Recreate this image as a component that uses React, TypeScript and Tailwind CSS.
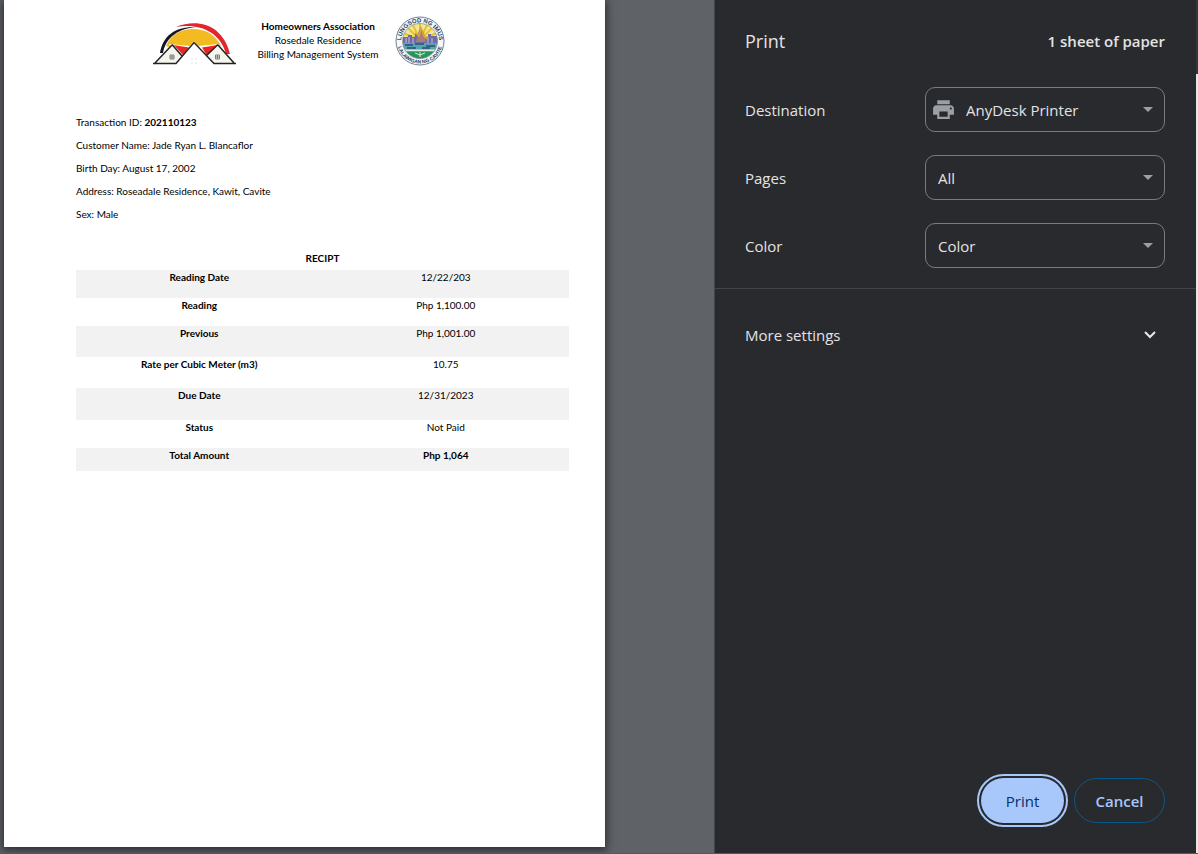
import type { ReactNode } from "react";
import { MdPrint } from "react-icons/md";

const details = [
  { label: "Transaction ID", value: "202110123", bold: true },
  { label: "Customer Name", value: "Jade Ryan L. Blancaflor" },
  { label: "Birth Day", value: "August 17, 2002" },
  { label: "Address", value: "Roseadale Residence, Kawit, Cavite" },
  { label: "Sex", value: "Male" },
];

const receipt = [
  { label: "Reading Date", value: "12/22/203", height: "h-7" },
  { label: "Reading", value: "Php 1,100.00", height: "h-7" },
  { label: "Previous", value: "Php 1,001.00", height: "h-[31px]" },
  { label: "Rate per Cubic Meter (m3)", value: "10.75", height: "h-[31px]" },
  { label: "Due Date", value: "12/31/2023", height: "h-8" },
  { label: "Status", value: "Not Paid", height: "h-7" },
  { label: "Total Amount", value: "Php 1,064", height: "h-[23px]", bold: true },
];

function HouseLogo() {
  return (
    <svg viewBox="0 0 85 46" className="mt-[21px] h-[46px] w-[85px]" aria-label="Rosedale Residence">
      <path d="M14 25C19 13 29 8 41 8s22 5 28 17L42 36Z" fill="#f3bb22" />
      <path d="M8 32C11 14 24 5 45 6 27 7 14 16 11 32Z" fill="#15152a" />
      <path d="M24 6C46-3 71 4 78 33h-4C68 10 46 2 24 6Z" fill="#e1262d" />
      <path d="M17 23l21 2 4-5 4 5 21-2-9 18H27Z" fill="#fff" />
      <path d="M21 24l16 2.500-7 8.500Z" fill="#ee2424" />
      <path d="M66 24l-16 2.500 5 8.500Z" fill="#ee2424" />
      <path d="M3 42 21 23l10 11-7 8Z" fill="#f3f6ef" />
      <path d="M82 42 66 23l-12 12 8 7Z" fill="#f3f6ef" />
      <path d="M24 42 42 22l20 20Z" fill="#fff" />
      <path d="M1 42.500H24L42 21.500 62 42.500H84M3 42 20 24M66 24 82 42M20 23.500 30 35M66 23.500 54 35" fill="none" stroke="#272222" strokeWidth="1.500" />
      <path d="M18 34h4v4h-4ZM20 34v4M18 36h4M63.500 34h4v4h-4ZM65.500 34v4M63.500 36h4" fill="none" stroke="#77736c" strokeWidth="0.900" />
      <path d="M39 37h2v2h-2ZM43 37h2v2h-2ZM39 41h2v2h-2ZM43 41h2v2h-2Z" fill="#f0f0f0" />
    </svg>
  );
}

function CitySeal() {
  return (
    <svg viewBox="0 0 50 52" className="mt-[15px] h-[52px] w-[50px]" aria-label="City seal">
      <defs>
        <path id="seal-top" d="M5.800 32A20 20 0 1 1 44.200 32" transform="translate(1.250 1.300) scale(.95)" />
        <path id="seal-bottom" d="M2.800 31A22.800 22.800 0 0 0 47.200 31" />
        <clipPath id="seal-disc"><circle cx="25" cy="26" r="17.500" /></clipPath>
      </defs>
      <circle cx="25" cy="26" r="24" fill="#f5f8f6" stroke="#57768b" strokeWidth="0.900" />
      <g clipPath="url(#seal-disc)">
        <path d="M7 8h36v36H7Z" fill="#f3e694" />
        <path d="M25 25 10 10M25 25 17 8M25 25V8M25 25 33 8M25 25 40 10M25 25 8 18M25 25 42 18" stroke="#e7c22f" strokeWidth="2" />
        <path d="M8 22h5v-2h4v2h3v-3h4v3h9v-3h3v2h7v9H8Z" fill="#6c6aa8" />
        <path d="M11 23v5M14 22v6M18 23v5M33 22v6M37 23v5" stroke="#d9c8dd" strokeWidth="0.900" />
        <path d="M21 27l3-12 2-3 3 6 2 9Z" fill="#a78170" />
        <path d="M20 18l4 3 2-8 3 8 3 3" fill="none" stroke="#d9a73d" strokeWidth="1.500" />
        <path d="M7 28h36v7H7Z" fill="#5aa3b4" />
        <path d="M10 30h8M20 29h9M31 31h9M12 33h9M27 33h8" stroke="#294f73" strokeWidth="1.300" />
        <path d="M7 35h36v9H7Z" fill="#289459" />
        <path d="M7 34.500h36v1.800H7Z" fill="#dfeedd" />
        <path d="M20 38l5 2 5-2M25 37v5" stroke="#d7ead9" strokeWidth="1" fill="none" />
      </g>
      <circle cx="25" cy="26" r="17.500" fill="none" stroke="#71909a" strokeWidth="0.700" />
      <g fill="#233c68" fontFamily="Liberation Sans, sans-serif" fontWeight="700">
        <text fontSize="6" textAnchor="middle"><textPath href="#seal-top" startOffset="50%">LUNGSOD NG IMUS</textPath></text>
        <text fontSize="5" textAnchor="middle"><textPath href="#seal-bottom" startOffset="50%">LALAWIGAN NG CAVITE</textPath></text>
      </g>
    </svg>
  );
}

function Setting({ id, label, options, icon }: { id: string; label: string; options: string[]; icon?: ReactNode }) {
  return (
    <div className="flex items-center justify-between">
      <label htmlFor={id} className="pt-0.5">{label}</label>
      <div className="relative w-60">
        {icon}
        <select
          id={id}
          className={
            "block h-[45px] w-full appearance-none rounded-[10px] border border-[#7b7b7b] bg-transparent pr-9 pt-px text-[15px] text-[#e3e3e3] outline-none " +
            (icon ? "pl-10" : "pl-3")
          }
        >
          {options.map((option) => (
            <option key={option} className="bg-[#292a2d]">{option}</option>
          ))}
        </select>
        <svg viewBox="0 0 10 5" className="pointer-events-none absolute right-3 top-5 h-[5px] w-[10px]" aria-hidden="true">
          <path d="M0 0h10L5 5Z" fill="#9aa0a6" />
        </svg>
      </div>
    </div>
  );
}

export default function App() {
  return (
    <div className="flex h-screen flex-col overflow-hidden bg-[#5f5a58] font-['Open_Sans','Noto_Sans',sans-serif] text-[15px] text-[#e3e3e3]">
      <div className="flex min-h-0 flex-1">
        <main className="min-w-0 flex-1 overflow-hidden bg-[#5f6368] pb-1.5 pl-1">
          <article className="h-full w-[601px] bg-white pl-[72px] pr-9 font-[Lato,sans-serif] text-[10px] text-black shadow-[0_2px_8px_2px_rgba(0,0,0,0.5)]">
            <header className="flex h-[111px] pl-[76px]">
              <HouseLogo />
              <div className="w-[158px] pl-1 pt-[19px] text-center leading-[14px]">
                <h1 className="font-bold">Homeowners Association</h1>
                <p>Rosedale Residence</p>
                <p>Billing Management System</p>
              </div>
              <CitySeal />
            </header>
            <section className="leading-[23px]">
              {details.map(({ label, value, bold }) => (
                <p key={label}>
                  {label}: {bold ? <strong>{value}</strong> : value}
                </p>
              ))}
            </section>
            <table className="mt-[25px] w-full table-fixed border-collapse text-center leading-[14px]">
              <caption className="h-[19px] font-bold">RECIPT</caption>
              <tbody>
                {receipt.map(({ label, value, height, bold }) => (
                  <tr key={label} className={height + " align-top odd:bg-[#f2f2f2]"}>
                    <th scope="row" className="p-0 font-bold">{label}</th>
                    <td className={bold ? "p-0 font-bold" : "p-0"}>{value}</td>
                  </tr>
                ))}
              </tbody>
            </table>
          </article>
        </main>

        <aside className="flex w-[482px] shrink-0 flex-col border-l border-[#45464a] bg-[#292a2d]">
          <header className="flex h-[87px] items-center justify-between pb-1 pl-[30px] pr-[31px]">
            <h2 className="pb-0.5 text-lg">Print</h2>
            <span className="font-semibold">1 sheet of paper</span>
          </header>
          <div className="flex flex-col gap-[23px] border-b border-[#434448] pb-5 pl-[30px] pr-[31px]">
            <Setting
              id="destination"
              label="Destination"
              options={["AnyDesk Printer"]}
              icon={<MdPrint className="pointer-events-none absolute left-1.5 top-[10px] size-[25px] text-[#9aa0a6]" aria-hidden="true" />}
            />
            <Setting id="pages" label="Pages" options={["All", "Custom"]} />
            <Setting id="color" label="Color" options={["Color", "Black and white"]} />
          </div>
          <button type="button" aria-expanded="false" className="flex h-[92px] items-center justify-between pl-[30px] pr-10 text-left">
            More settings
            <svg viewBox="0 0 12 8" className="h-2 w-3" aria-hidden="true">
              <path d="m1 1 5 5 5-5" fill="none" stroke="#e8eaed" strokeWidth="2" />
            </svg>
          </button>
          <footer className="mt-auto flex justify-end gap-[10px] pb-[30px] pl-[30px] pr-[31px] font-semibold">
            <button type="button" className="h-[45px] w-[83px] rounded-full bg-[#a8c7fa] pt-px font-medium text-[#062e6f] outline-2 outline-offset-2 outline-[#a8c7fa]">
              Print
            </button>
            <button type="button" className="h-[45px] w-[91px] rounded-full border border-[#045a8d] pt-px text-[#a8c7fa]">
              Cancel
            </button>
          </footer>
        </aside>
        <div className="flex w-0.5 shrink-0 flex-col">
          <div className="h-[74px] bg-[#35363a]" />
          <div className="flex-1 bg-[#e9e4e1]" />
        </div>
      </div>
      <div className="h-px shrink-0 bg-[#5f5552]" />
    </div>
  );
}
